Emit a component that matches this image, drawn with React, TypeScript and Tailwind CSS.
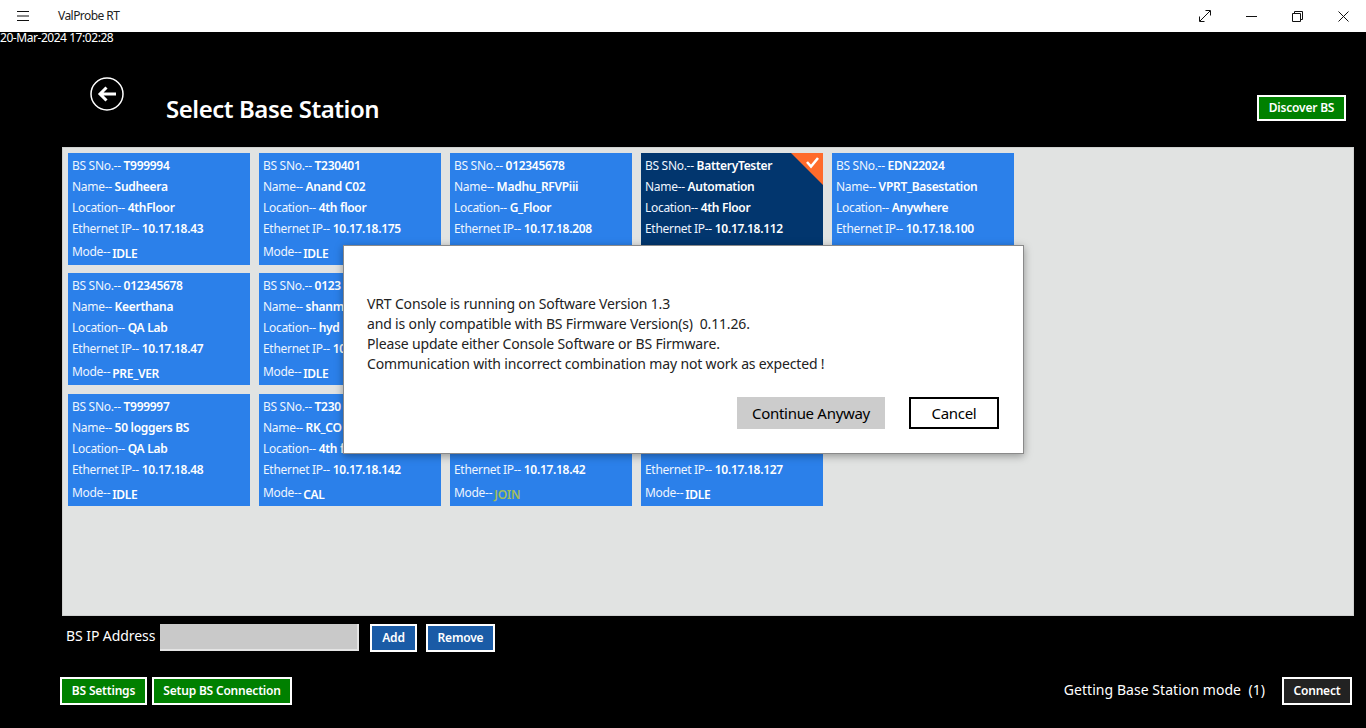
const font = "font-['Noto_Sans','Open_Sans',sans-serif]"

type Station = {
  sno?: string
  name?: string
  location?: string
  ip?: string
  mode?: string
  selected?: boolean
}

// tiles under the dialog only carry the lines that can actually be seen
const stations: Station[] = [
  { sno: 'T999994', name: 'Sudheera', location: '4thFloor', ip: '10.17.18.43', mode: 'IDLE' },
  { sno: 'T230401', name: 'Anand C02', location: '4th floor', ip: '10.17.18.175', mode: 'IDLE' },
  { sno: '012345678', name: 'Madhu_RFVPiii', location: 'G_Floor', ip: '10.17.18.208' },
  { sno: 'BatteryTester', name: 'Automation', location: '4th Floor', ip: '10.17.18.112', selected: true },
  { sno: 'EDN22024', name: 'VPRT_Basestation', location: 'Anywhere', ip: '10.17.18.100' },
  { sno: '012345678', name: 'Keerthana', location: 'QA Lab', ip: '10.17.18.47', mode: 'PRE_VER' },
  { sno: '0123', name: 'shanm', location: 'hyd', ip: '10', mode: 'IDLE' },
  {},
  {},
  {},
  { sno: 'T999997', name: '50 loggers BS', location: 'QA Lab', ip: '10.17.18.48', mode: 'IDLE' },
  { sno: 'T230', name: 'RK_CO', location: '4th f', ip: '10.17.18.142', mode: 'CAL' },
  { ip: '10.17.18.42', mode: 'JOIN' },
  { ip: '10.17.18.127', mode: 'IDLE' },
]

function Line({ label, value }: { label: string; value?: string }) {
  return (
    <div className="h-[21px]">
      {value && (
        <>
          {label} <b className="font-semibold text-white">{value}</b>
        </>
      )}
    </div>
  )
}

function Card({ s }: { s: Station }) {
  return (
    <div className={`relative h-[112px] pl-1 pt-[2px] text-xs leading-[21px] tracking-[-0.3px] text-[#eef5fe] ${s.selected ? 'bg-[#02366e]' : 'bg-[#2b80ea]'}`}>
      <Line label="BS SNo.--" value={s.sno} />
      <Line label="Name--" value={s.name} />
      <Line label="Location--" value={s.location} />
      <Line label="Ethernet IP--" value={s.ip} />
      {s.mode && (
        <div className="mt-[2px] flex">
          Mode--
          <b className={`ml-[2px] pt-[2px] font-semibold ${s.mode === 'JOIN' ? 'text-[#a3bd5c]' : 'text-white'}`}>{s.mode}</b>
        </div>
      )}
      {s.selected && (
        <svg className="absolute right-0 top-0" width="32" height="32" viewBox="0 0 32 32">
          <polygon points="0,0 32,0 32,32" fill="#ff6b2b" />
          <path d="M16 9l4 4.500 7-8.500" fill="none" stroke="#fff" strokeWidth="2.6" />
        </svg>
      )}
    </div>
  )
}

function ActionButton({ label, className }: { label: string; className: string }) {
  return (
    <button className={`h-7 border-2 border-white text-xs font-semibold tracking-[-0.2px] text-white ${className}`}>
      {label}
    </button>
  )
}

export default function App() {
  return (
    <div className={`relative flex h-[728px] w-full flex-col overflow-hidden bg-black text-white ${font}`}>
      {/* title bar */}
      <div className="flex h-8 shrink-0 items-center bg-white text-black">
        <svg className="ml-[17px]" width="12" height="10" viewBox="0 0 12 10" stroke="#111" strokeWidth="1">
          <path d="M0 .5h12M0 5h12M0 9.500h12" />
        </svg>
        <span className="ml-[29px] text-xs tracking-[-0.55px] text-[#222]">ValProbe RT</span>
        <div className="ml-auto flex">
          <div className="flex h-8 w-[46px] items-center justify-center">
            <svg width="12" height="12" viewBox="0 0 12 12" fill="none" stroke="#111" strokeWidth="1">
              <path d="M1 11L11 1M6.500 .5h5v5M.5 6.500v5h5" />
            </svg>
          </div>
          <div className="flex h-8 w-[46px] items-center justify-center">
            <svg width="11" height="1" viewBox="0 0 11 1" stroke="#111"><path d="M0 .5h11" /></svg>
          </div>
          <div className="flex h-8 w-[46px] items-center justify-center">
            <svg width="11" height="11" viewBox="0 0 11 11" fill="none" stroke="#111" strokeWidth="1">
              <path d="M.5 2.500h8v8h-8zM2.500 2.500v-2h8v8h-2" />
            </svg>
          </div>
          <div className="flex h-8 w-[46px] items-center justify-center">
            <svg width="11" height="11" viewBox="0 0 11 11" fill="none" stroke="#111" strokeWidth="1">
              <path d="M.5 .5l10 10M10.500 .5l-10 10" />
            </svg>
          </div>
        </div>
      </div>

      <div className="h-[11px] text-xs leading-[11px] tracking-[-0.45px]">20-Mar-2024 17:02:28</div>

      {/* header */}
      <div className="flex h-[104px] shrink-0 items-start">
        <svg className="ml-[90px] mt-[34px]" width="34" height="34" viewBox="0 0 34 34" fill="none" stroke="#fff">
          <circle cx="17" cy="17" r="16" strokeWidth="1.5" />
          <path d="M26 17H10M16.500 10.500L10 17l6.500 6.500" strokeWidth="3" />
        </svg>
        <h1 className="ml-[42px] mt-[50px] text-2xl font-semibold tracking-[-0.45px]">Select Base Station</h1>
        <ActionButton label="Discover BS" className="ml-auto mr-5 mt-[52px] h-[26px] w-[89px] bg-[#008000]" />
      </div>

      {/* base station list */}
      <div className="ml-[62px] h-[469px] w-[1292px] shrink-0 border border-[#cfd1d0] bg-[#e1e3e2] pl-[5px] pt-[5px]">
        <div className="grid grid-cols-[repeat(5,182px)] gap-x-[9px] gap-y-[8.4px]">
          {stations.map((s, i) => (
            <Card key={i} s={s} />
          ))}
        </div>
      </div>

      {/* add by address */}
      <div className="ml-[66px] mt-2 flex items-start">
        <span className="w-[94px] text-sm leading-6 tracking-[-0.07px]">BS IP Address</span>
        <div className="h-[27px] w-[199px] border-b-2 border-r-2 border-[#e4e4e4] bg-[#c9c9c9]" />
        <ActionButton label="Add" className="ml-[11px] w-[47px] bg-[#1a5ba6]" />
        <ActionButton label="Remove" className="ml-[9px] w-[69px] bg-[#1a5ba6]" />
      </div>

      {/* footer */}
      <div className="ml-[60px] mt-[25px] flex items-center">
        <ActionButton label="BS Settings" className="w-[87px] bg-[#008000]" />
        <ActionButton label="Setup BS Connection" className="ml-[5px] w-[140px] bg-[#008000]" />
        <span className="ml-auto -translate-y-px text-sm tracking-[0.05px]">Getting Base Station mode&nbsp; (1)</span>
        <ActionButton label="Connect" className="ml-[17px] mr-[14px] w-[70px] bg-[#222222]" />
      </div>

      {/* version warning */}
      <div className="absolute left-[343px] top-[245px] flex h-[209px] w-[681px] flex-col border border-[#8a8a8a] bg-white pl-[23px] pr-6 pt-[48px] text-black shadow-[0_2px_8px_rgba(0,0,0,0.35)]">
        <p className="text-sm leading-5 tracking-[-0.16px] text-[#222]">
          VRT Console is running on Software Version 1.3
          <br />
          and is only compatible with BS Firmware Version(s)&nbsp; 0.11.26.
          <br />
          Please update either Console Software or BS Firmware.
          <br />
          Communication with incorrect combination may not work as expected !
        </p>
        <div className="mt-[23px] flex justify-end">
          <button className="h-8 w-[148px] bg-[#cccccc] text-[15px] tracking-[-0.3px] text-black">Continue Anyway</button>
          <button className="ml-6 h-8 w-[90px] border-2 border-black text-[15px] tracking-[-0.3px] text-black">Cancel</button>
        </div>
      </div>
    </div>
  )
}
